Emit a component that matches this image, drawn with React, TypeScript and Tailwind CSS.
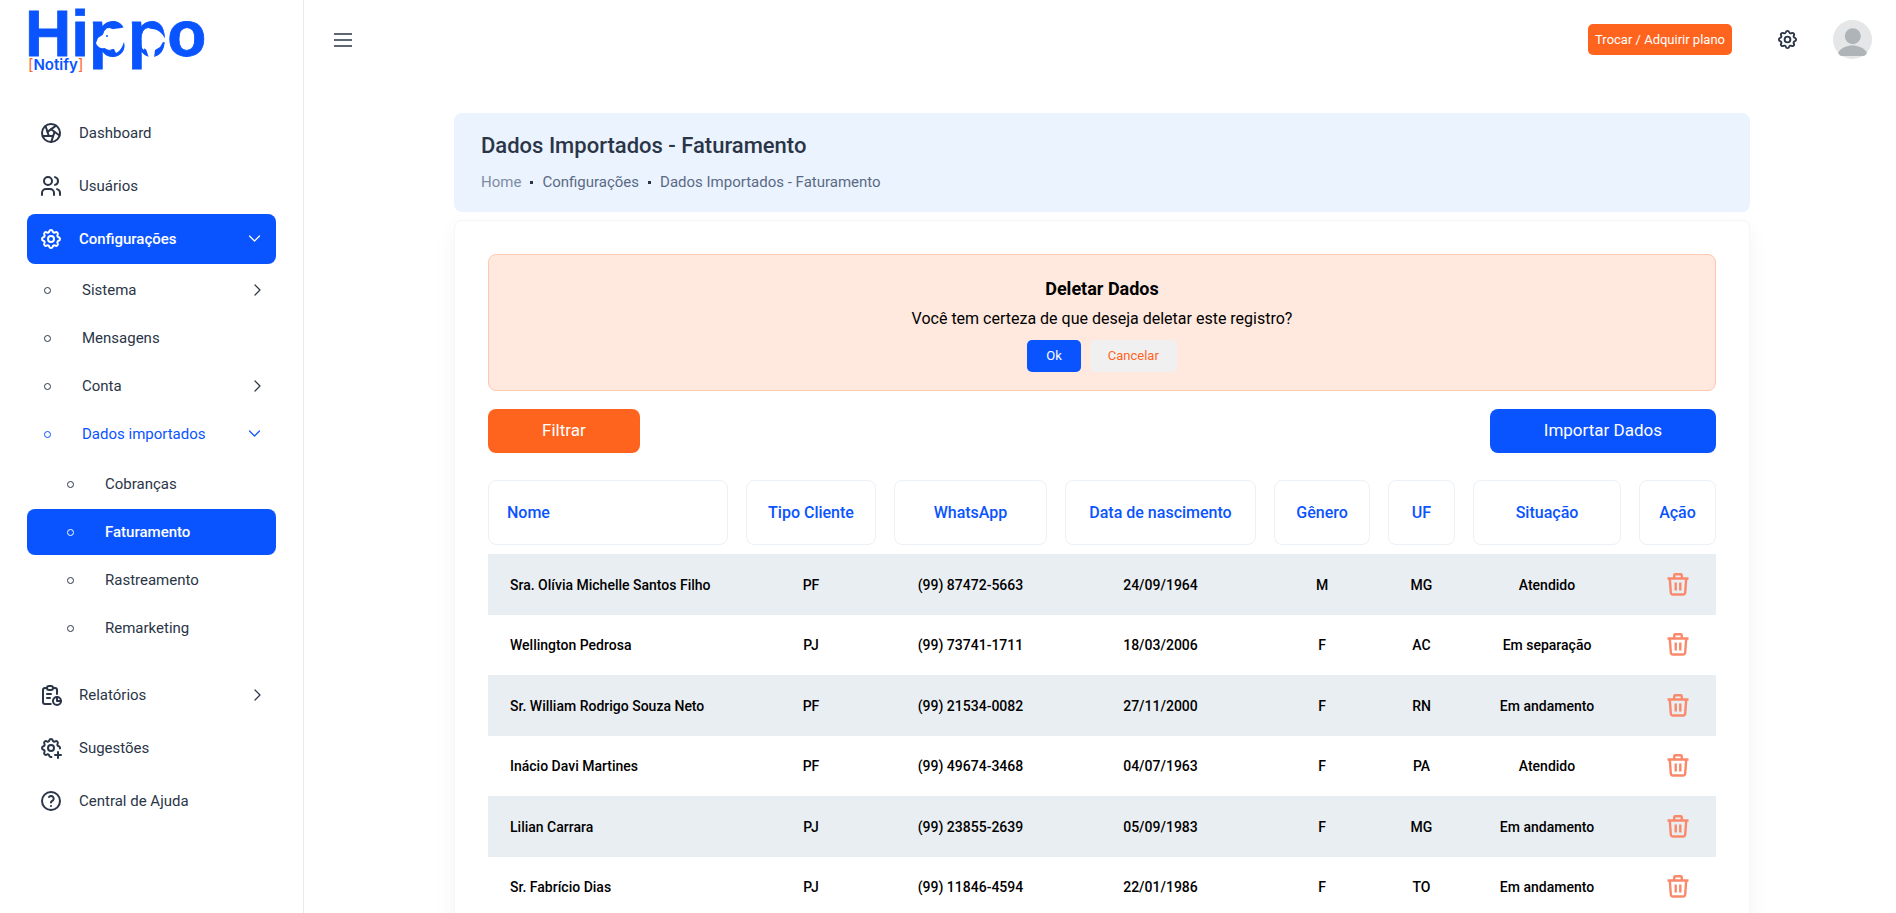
import React from 'react';
import { TbAperture, TbUsers, TbSettings, TbReport, TbSettingsPlus, TbHelp } from 'react-icons/tb';
import clsx from 'clsx';

interface Cliente {
    nome: string;
    tipo: string;
    whatsapp: string;
    nascimento: string;
    genero: string;
    uf: string;
    situacao: string;
}

const clientes: Cliente[] = [
    { nome: 'Sra. Olívia Michelle Santos Filho', tipo: 'PF', whatsapp: '(99) 87472-5663', nascimento: '24/09/1964', genero: 'M', uf: 'MG', situacao: 'Atendido' },
    { nome: 'Wellington Pedrosa', tipo: 'PJ', whatsapp: '(99) 73741-1711', nascimento: '18/03/2006', genero: 'F', uf: 'AC', situacao: 'Em separação' },
    { nome: 'Sr. William Rodrigo Souza Neto', tipo: 'PF', whatsapp: '(99) 21534-0082', nascimento: '27/11/2000', genero: 'F', uf: 'RN', situacao: 'Em andamento' },
    { nome: 'Inácio Davi Martines', tipo: 'PF', whatsapp: '(99) 49674-3468', nascimento: '04/07/1963', genero: 'F', uf: 'PA', situacao: 'Atendido' },
    { nome: 'Lilian Carrara', tipo: 'PJ', whatsapp: '(99) 23855-2639', nascimento: '05/09/1983', genero: 'F', uf: 'MG', situacao: 'Em andamento' },
    { nome: 'Sr. Fabrício Dias', tipo: 'PJ', whatsapp: '(99) 11846-4594', nascimento: '22/01/1986', genero: 'F', uf: 'TO', situacao: 'Em andamento' },
];

const colunas = [
    { titulo: 'Nome', largura: 'w-[249px]' },
    { titulo: 'Tipo Cliente', largura: 'w-[148px]' },
    { titulo: 'WhatsApp', largura: 'w-[171px]' },
    { titulo: 'Data de nascimento', largura: 'w-[209px]' },
    { titulo: 'Gênero', largura: 'w-[114px]' },
    { titulo: 'UF', largura: 'w-[85px]' },
    { titulo: 'Situação', largura: 'w-[166px]' },
    { titulo: 'Ação', largura: 'w-[86px]' },
];

const Logo = () => (
    <svg width="190" height="76" viewBox="0 0 190 76" role="img" aria-label="Hippo Notify">
        <text x="1" y="56" fontFamily="'Liberation Sans', sans-serif" fontWeight="700" fontSize="64" fill="#0a54ff" stroke="#0a54ff" strokeWidth="0.8">Hippo</text>
        {/* head */}
        <path d="M72 43 L74 38 L80 34 L83 28 L86 30 C91 28 96 29 101 27 L107 25 L107 58 L97 56 C101 51 101 46 100 42 C98 48 96 51 92 53 L90 49 L80 48 C76 49 73 46 72 43Z" fill="#fff" />
        <circle cx="83" cy="36" r="1" fill="#0a54ff" />
        {/* rump */}
        <path d="M118 48 C117 38 120 30 126 29 C134 28 140 34 143 43 L139 42 L136 47 L131 50 L130 58 L125 58 L123 52 L121 46 L120 50Z" fill="#fff" />
        <text x="4" y="70" fontFamily="Inter, sans-serif" fontWeight="600" fontSize="15" fill="#0a54ff">
            <tspan fill="#ff641e" fontWeight="400">[</tspan>Notify<tspan fill="#ff641e" fontWeight="400">]</tspan>
        </text>
    </svg>
);

const Chevron = ({ down = false }: { down?: boolean }) => (
    <svg className="ml-auto shrink-0" width="12" height="12" viewBox="0 0 12 12" fill="none" stroke="currentColor" strokeWidth="1.2" strokeLinecap="round" strokeLinejoin="round">
        <path d={down ? 'M0.5 3 5.5 8 10.5 3' : 'M6 1 11 6 6 11'} />
    </svg>
);

const TrashIcon = () => (
    <svg width="22" height="24" viewBox="0 1.5 22 24" fill="none" stroke="#fa896b" strokeWidth="2.4">
        <path d="M0.5 7H21.5M7.2 6.500V4Q7.2 2.800 8.400 2.800H13.600Q14.800 2.800 14.800 4V6.500M2.800 7 3.800 21Q3.900 23 6 23H16Q18.100 23 18.200 21L19.200 7M8.700 11V19M13.300 11V19" />
    </svg>
);

interface MenuItemProps {
    label: string;
    icon: React.ReactNode;
    active?: boolean;
    arrow?: 'right' | 'down';
}

const MenuItem = ({ label, icon, active, arrow }: MenuItemProps) => (
    <a
        href="#"
        className={clsx('flex h-[50px] items-center gap-4 rounded-lg pr-[15px] pl-3 text-[15px]', active && 'bg-[#0a54ff] font-medium text-white')}
    >
        {icon}
        <span>{label}</span>
        {arrow && <Chevron down={arrow === 'down'} />}
    </a>
);

interface SubItemProps {
    label: string;
    nested?: boolean;
    active?: boolean;
    open?: boolean;
    arrow?: 'right' | 'down';
}

const SubItem = ({ label, nested, active, open, arrow }: SubItemProps) => (
    <a
        href="#"
        className={clsx(
            'flex h-[46px] items-center gap-[31px] rounded-lg pr-[15px] text-[15px]',
            nested ? 'pl-10' : 'pl-[17px]',
            active && 'bg-[#0a54ff] font-medium text-white',
            open && 'text-[#0a54ff]',
        )}
    >
        <span className="h-[7px] w-[7px] rounded-full border border-current" />
        <span>{label}</span>
        {arrow && <Chevron down={arrow === 'down'} />}
    </a>
);

const Sidebar = () => (
    <aside className="w-[304px] shrink-0 border-r border-[#e5eaef]">
        <div className="px-6">
            <Logo />
        </div>
        <nav className="mt-8 px-[27px]">
            <ul className="flex flex-col gap-[3px]">
                <li><MenuItem label="Dashboard" icon={<TbAperture size={24} />} /></li>
                <li><MenuItem label="Usuários" icon={<TbUsers size={24} />} /></li>
                <li>
                    <MenuItem label="Configurações" icon={<TbSettings size={24} />} active arrow="down" />
                    <ul className="mt-[3px] mb-4 flex flex-col gap-[2px]">
                        <li><SubItem label="Sistema" arrow="right" /></li>
                        <li><SubItem label="Mensagens" /></li>
                        <li><SubItem label="Conta" arrow="right" /></li>
                        <li>
                            <SubItem label="Dados importados" open arrow="down" />
                            <ul className="mt-1 flex flex-col gap-[2px]">
                                <li><SubItem label="Cobranças" nested /></li>
                                <li><SubItem label="Faturamento" nested active /></li>
                                <li><SubItem label="Rastreamento" nested /></li>
                                <li><SubItem label="Remarketing" nested /></li>
                            </ul>
                        </li>
                    </ul>
                </li>
                <li><MenuItem label="Relatórios" icon={<TbReport size={24} />} arrow="right" /></li>
                <li><MenuItem label="Sugestões" icon={<TbSettingsPlus size={24} />} /></li>
                <li><MenuItem label="Central de Ajuda" icon={<TbHelp size={24} />} /></li>
            </ul>
        </nav>
    </aside>
);

const Header = () => (
    <header className="flex h-[79px] items-center pr-6 pl-[30px]">
        <button aria-label="Menu">
            <svg width="18" height="14" viewBox="0 0 18 14" fill="none" stroke="currentColor" strokeWidth="1.7">
                <path d="M0 1H18M0 7H18M0 13H18" />
            </svg>
        </button>
        <button className="ml-auto h-[31px] rounded-[5px] bg-[#ff641e] px-[7px] text-[13px] text-white">
            Trocar / Adquirir plano
        </button>
        <button aria-label="Configurações" className="ml-11">
            <TbSettings size={23} />
        </button>
        <button aria-label="Perfil" className="ml-[34px]">
            <svg width="39" height="39" viewBox="0 0 39 39">
                <circle cx="19.5" cy="19.5" r="19.5" fill="#e4e6e7" />
                <circle cx="19.8" cy="16.2" r="8" fill="#aeb4b7" />
                <path d="M5 33C8 27.5 14 25.5 19.5 25.5S31 27.5 34 33C33 34.5 32 35.5 31 36H8C7 35.5 6 34.5 5 33Z" fill="#aeb4b7" />
            </svg>
        </button>
    </header>
);

const ClientesTable = () => (
    <table className="w-full table-fixed border-collapse text-black">
        <colgroup>
            {colunas.map((c) => (
                <col key={c.titulo} className={c.largura} />
            ))}
        </colgroup>
        <thead>
            <tr>
                {colunas.map((c, i) => (
                    <th key={c.titulo} className="px-[9px] pb-[9px] font-medium first:pl-0 last:pr-0">
                        <div
                            className={clsx(
                                'flex h-[65px] items-center rounded-lg border border-[#ebf1f6] text-base whitespace-nowrap text-[#0a54ff]',
                                i === 0 ? 'pl-[18px]' : 'justify-center',
                            )}
                        >
                            {c.titulo}
                        </div>
                    </th>
                ))}
            </tr>
        </thead>
        <tbody>
            {clientes.map((c) => (
                <tr key={c.nome} className="h-[60px] text-center text-sm font-medium whitespace-nowrap odd:h-[61px] odd:bg-[#e9eef2]">
                    <td className="pl-[22px] text-left">{c.nome}</td>
                    <td>{c.tipo}</td>
                    <td>{c.whatsapp}</td>
                    <td>{c.nascimento}</td>
                    <td>{c.genero}</td>
                    <td>{c.uf}</td>
                    <td>{c.situacao}</td>
                    <td className="pl-[9px]">
                        <button aria-label={`Deletar ${c.nome}`} className="mx-auto block">
                            <TrashIcon />
                        </button>
                    </td>
                </tr>
            ))}
        </tbody>
    </table>
);

const App: React.FC = () => {
    return (
        <div className="flex h-screen overflow-hidden bg-white font-['Roboto',sans-serif] text-[#2a3547]">
            <Sidebar />
            <div className="min-w-0 flex-1 overflow-y-auto [scrollbar-width:none]">
                <Header />
                <main className="pt-[34px] pb-8 pl-1">
                    <div className="mx-auto max-w-[1296px]">
                        <section className="rounded-lg bg-[#ebf3fe] px-[27px] pt-[19px] pb-[18px]">
                            <h1 className="text-[22px] leading-7 font-medium">Dados Importados - Faturamento</h1>
                            <ol className="mt-[10px] flex items-center text-[15px] leading-6 text-[#5a6a85]">
                                <li className="opacity-75"><a href="#">Home</a></li>
                                <li className="mx-[9px] h-[3px] w-[3px] bg-[#2a3547]" />
                                <li>Configurações</li>
                                <li className="mx-[9px] h-[3px] w-[3px] bg-[#2a3547]" />
                                <li>Dados Importados - Faturamento</li>
                            </ol>
                        </section>

                        <section className="mt-2 rounded-lg border border-[#f5f6f8] px-[33px] py-[33px] shadow-[0_9px_18px_rgba(145,158,171,0.12)]">
                            <div role="alert" className="flex flex-col items-center rounded-lg border border-[#ffc9b0] bg-[#ffe8de] pt-5 pb-[18px] text-black">
                                <h2 className="text-lg leading-7 font-bold">Deletar Dados</h2>
                                <p className="mt-1 text-base leading-6">Você tem certeza de que deseja deletar este registro?</p>
                                <div className="mt-[9px] flex gap-[9px] text-[13px]">
                                    <button className="h-8 rounded-[5px] bg-[#0a54ff] px-[19px] text-white">Ok</button>
                                    <button className="h-8 rounded-[5px] bg-[#f0f0f0] px-[18px] text-[#ff641e]">Cancelar</button>
                                </div>
                            </div>

                            <div className="mt-[18px] mb-[27px] flex justify-between text-[17px] text-white">
                                <button className="h-11 rounded-lg bg-[#ff641e] px-[54px]">Filtrar</button>
                                <button className="h-11 rounded-lg bg-[#0a54ff] px-[54px]">Importar Dados</button>
                            </div>

                            <ClientesTable />
                        </section>
                    </div>
                </main>
            </div>
        </div>
    );
};

export default App;
